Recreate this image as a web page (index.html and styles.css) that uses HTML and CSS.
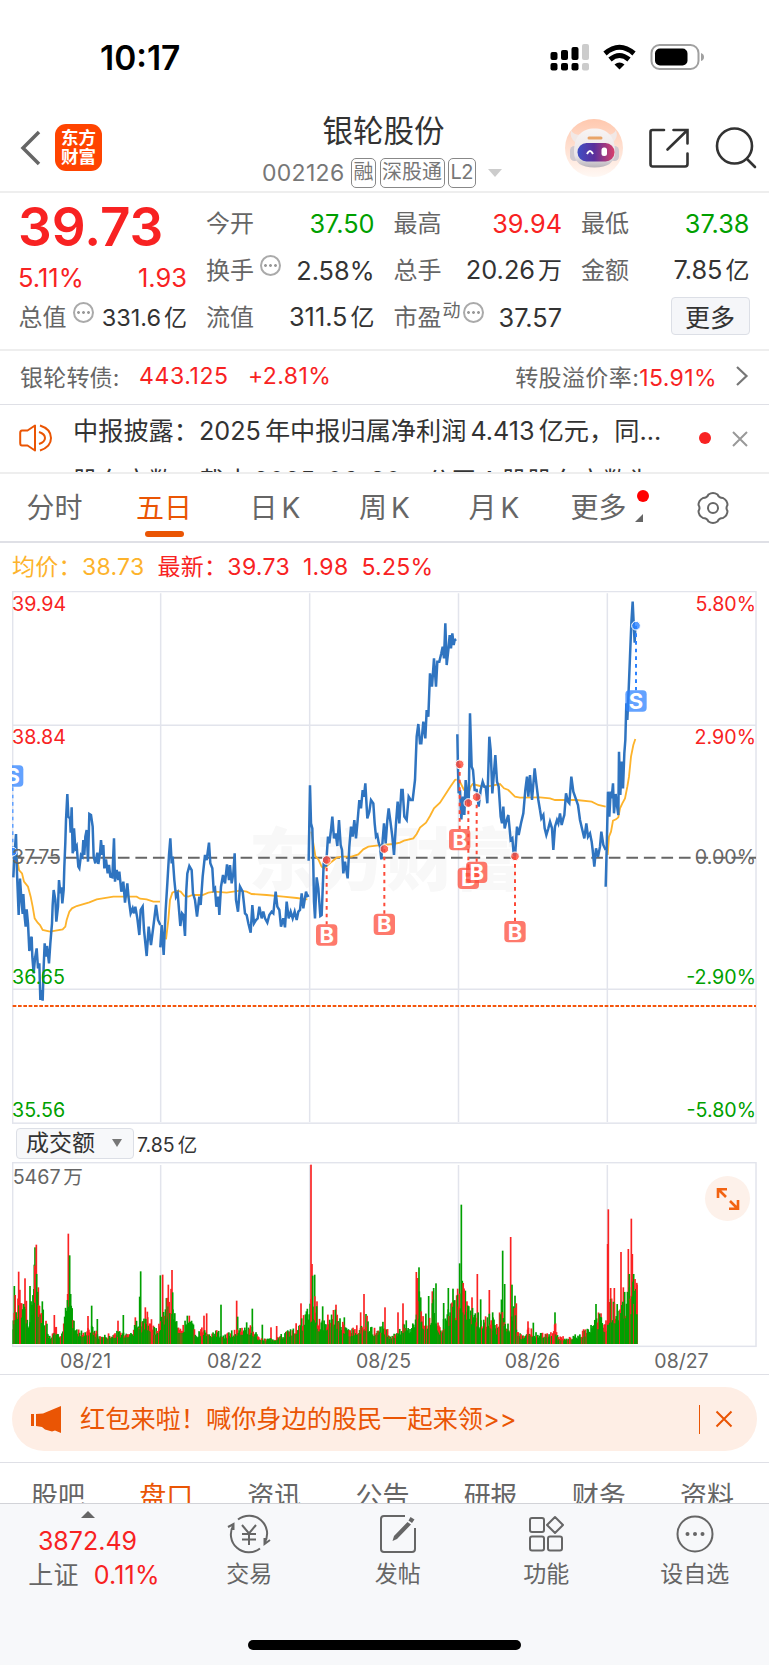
FILE: index.html
```
<!DOCTYPE html>
<html lang="zh-CN">
<head>
    <meta charset="UTF-8">
    <title>银轮股份 002126</title>
    <link rel="stylesheet" href="styles.css">
</head>
<body>
<div class="status">
    <span class="time">10:17</span>
    <svg class="status-icons" width="156" height="28" viewBox="550 43 156 28">
        <g fill="#000">
            <rect x="551.5" y="52" width="7" height="8" rx="2"/>
            <rect x="562" y="50" width="7" height="10" rx="2"/>
            <rect x="572.5" y="47" width="7" height="13" rx="2"/>
            <rect x="551.5" y="63" width="7" height="7.500" rx="2"/>
            <rect x="562" y="63" width="7" height="7.500" rx="2"/>
            <rect x="572.500" y="63" width="7" height="7.500" rx="2"/>
        </g>
        <g fill="#ccc">
            <rect x="583" y="44" width="7" height="16" rx="2"/>
            <rect x="583" y="63" width="7" height="7.500" rx="2"/>
        </g>
        <g fill="none" stroke="#000" stroke-width="5">
            <path d="M606 53.500Q620.500 41 635 53.500"/>
            <path d="M611 59.500Q620.500 51.500 630 59.500"/>
        </g>
        <path d="M615.500 64.500Q620.500 60.500 625.500 64.500L620.500 69.500Z"/>
        <rect x="652.500" y="45" width="47" height="24" rx="8" fill="none" stroke="#a0a0a0" stroke-width="2"/>
        <rect x="656" y="48.500" width="32.500" height="17" rx="5"/>
        <path d="M702 53Q705 54 705 57Q705 60 702 61Z" fill="#a0a0a0"/>
    </svg>
</div>

<div class="header">
    <div class="header-left">
        <svg width="22" height="36" viewBox="0 0 22 36"><path d="M19 2L3 18L19 34" fill="none" stroke="#666" stroke-width="3.500"/></svg>
        <div class="logo">东方<br>财富</div>
    </div>
    <div class="header-title">
        <h1>银轮股份</h1>
        <div class="code"><span class="num">002126</span><i>融</i><i>深股通</i><i class="l2">L2</i><b class="down"></b></div>
    </div>
    <div class="header-right">
        <svg width="58" height="58" viewBox="0 0 58 58">
            <defs>
                <linearGradient id="peach" x1="0" y1="0" x2="0" y2="1"><stop offset="0" stop-color="#ffc8ae"/><stop offset="1" stop-color="#fff8f4"/></linearGradient>
                <linearGradient id="shell" x1="0" y1="0" x2="0" y2="1"><stop offset="0" stop-color="#f8f4f3"/><stop offset=".7" stop-color="#e9e5e8"/><stop offset="1" stop-color="#b9b3ba"/></linearGradient>
                <linearGradient id="visor" x1="0" y1="0" x2="1" y2="0"><stop offset="0" stop-color="#3f4fc4"/><stop offset=".45" stop-color="#5a2f9c"/><stop offset="1" stop-color="#d9406a"/></linearGradient>
            </defs>
            <circle cx="29" cy="29" r="29" fill="url(#peach)"/>
            <path d="M11 24Q4 19 6 11Q8 16 16 16ZM47 24Q54 19 51 11Q49 16 41 16Z" fill="#f1e8e6"/>
            <rect x="5" y="27" width="9" height="15" rx="4.500" fill="#cfc9cf"/>
            <rect x="45" y="27" width="9" height="15" rx="4.500" fill="#cfc9cf"/>
            <path d="M9 33C9 17 17 9.500 29.500 9.500S50 17 50 33Q50 48.500 29.500 48.500T9 33Z" fill="url(#shell)"/>
            <rect x="22.500" y="17.500" width="15" height="3" rx="1.500" fill="#e9a468"/>
            <rect x="12.500" y="24" width="37" height="18.500" rx="9" fill="url(#visor)"/>
            <path d="M22 35Q25 29 28 35" fill="none" stroke="#fff" stroke-width="2"/>
            <rect x="36.500" y="28.500" width="5.500" height="8.500" rx="2.500" fill="#fff"/>
        </svg>
        <svg width="42" height="42" viewBox="648 127 42 42" fill="none" stroke="#333" stroke-width="2.600" stroke-linecap="round">
            <path d="M664 130H652.500Q650.500 130 650.500 132V164Q650.500 166.500 652.500 166.500H685Q687.500 166.500 687.500 164V153.500M673.500 130H687.500V143.500M687 130.500L667.500 149.500"/>
        </svg>
        <svg width="43" height="43" viewBox="716 126 43 43" fill="none" stroke="#333" stroke-width="2.600" stroke-linecap="round">
            <circle cx="735.500" cy="146" r="17.500"/><path d="M748 159L756 167"/>
        </svg>
    </div>
</div>

<div class="quote">
    <div class="price"><strong>39.73</strong><div class="row red"><span>5.11%</span><span>1.93</span></div></div>
    <div class="cell"><label>今开</label><em class="green">37.50</em></div>
    <div class="cell"><label>最高</label><em class="red">39.94</em></div>
    <div class="cell"><label>最低</label><em class="green">37.38</em></div>
    <div class="cell"><label>换手</label><u class="tip"></u><em>2.58%</em></div>
    <div class="cell"><label>总手</label><em>20.26<s>万</s></em></div>
    <div class="cell"><label>金额</label><em>7.85<s>亿</s></em></div>
    <div class="cell small"><label>总值</label><u class="tip"></u><em>331.6<s>亿</s></em></div>
    <div class="cell"><label>流值</label><em>311.5<s>亿</s></em></div>
    <div class="cell"><label>市盈</label><sup>动</sup><u class="tip pe"></u><em>37.57</em></div>
    <div class="cell"><button class="more">更多</button></div>
</div>

<div class="bond">
    <span class="bond-name">银轮转债:</span><span class="red bond-price">443.125</span><span class="red">+2.81%</span>
    <span class="bond-rate">转股溢价率:<span class="red">15.91%</span></span>
    <svg width="14" height="22" viewBox="0 0 14 22"><path d="M2 2L11.500 11L2 20" fill="none" stroke="#777" stroke-width="2.200"/></svg>
</div>

<div class="news">
    <svg class="horn" width="34" height="30" viewBox="0 0 34 30" fill="none" stroke="#ea5504" stroke-width="2">
        <path d="M16 2.500V27.500L8.500 22.500H3Q1.200 22.500 1.200 20V10Q1.200 7.500 3 7.500H8.500Z" stroke-linejoin="round"/>
        <path d="M20 9Q26 11 26 15T20 21M21 2.500Q32 6 32 15T21 27.500"/>
    </svg>
    <div class="news-list">
        <p>中报披露：2025<s></s>年中报归属净利润<s></s>4.413<s></s>亿元，同...</p>
        <p>股东户数：截止<s></s>2025-06-30，公司<s></s>A<s></s>股股东户数为</p>
    </div>
    <b class="dot"></b>
    <svg width="18" height="18" viewBox="0 0 18 18"><path d="M2 2L16 16M16 2L2 16" stroke="#999" stroke-width="2"/></svg>
</div>

<div class="tabs">
    <span>分时</span>
    <span class="active">五日</span>
    <span>日<s></s>K</span>
    <span>周<s></s>K</span>
    <span>月<s></s>K</span>
    <span class="has-more">更多</span>
    <svg width="34" height="34" viewBox="0 0 34 34" fill="none" stroke="#666" stroke-width="2">
        <path d="M12.500 3.500Q17 .5 21.500 3.500Q23 7 27 7Q31.500 9.500 31.500 14Q29.500 17 31.500 20Q31.500 24.500 27 27Q23 27 21.500 30.500Q17 33.500 12.500 30.500Q11 27 7 27Q2.500 24.500 2.500 20Q4.500 17 2.500 14Q2.500 9.500 7 7Q11 7 12.500 3.500Z"/>
        <circle cx="17" cy="17" r="5"/>
    </svg>
</div>

<div class="legend"><span class="avg">均价：38.73</span><span>最新：39.73</span><span>1.98</span><span>5.25%</span></div>

<!-- 五日分时图 -->
<svg class="price-chart" width="745" height="534" viewBox="36 3 2235 1602">
    <text class="mark" x="746" y="884">东方财富</text>
    <g class="grid">
        <path d="M482 10V1596M929 10V1596M1375.500 10V1596M1822 10V1596M38 406H2268M38 1198H2268"/>
        <rect x="38" y="4.500" width="2230" height="1595"/>
    </g>
    <path class="zero" d="M38 803H2268"/>
    <path class="limit" d="M38 1248H2268"/>
    <path class="sell-line" d="M38 592V780"/>
    <g class="avg-line">
        <polyline points="50,800 57,840 66,850 72,875 84,890 92,920 98,950 104,985 113,998 120,1005 128,1020 150,1025 188,1018 196,1010 200,990 208,965 216,955 230,948 268,937 290,928 340,920 410,920 420,926 440,928 460,935 480,935"/>
        <polyline points="498,1048 505,990 510,930 517,908 530,902 542,905 553,918 565,920 578,915 608,915 625,908 645,905 680,908 720,902 740,905 755,912 800,915 850,920 890,924 922,928"/>
        <g transform="translate(900 0)">
            <polyline points="34,725 40,760 46,798 55,808 65,830 72,835 95,815 110,803 125,800 155,800 175,793 190,778 205,770 235,766 280,762 300,758 312,752 340,745 350,732 360,713 378,698 390,678 402,655 420,638 435,615 450,592 465,570 470,568"/>
            <polyline points="474,568 482,580 492,600 505,612 512,590 518,582 540,588 560,590 600,582 612,595 625,600 645,620 660,623 720,622"/>
        </g>
        <g transform="translate(1620 0)">
            <polyline points="0,622 30,625 45,630 110,630 155,635 175,645 197,650"/>
            <polyline points="203,795 207,740 213,725 219,692 228,688 235,682 240,655 247,640 255,625 262,590 267,560 273,500 280,465 286,447"/>
        </g>
    </g>
    <g class="price-line">
        <polyline points="40,862 43,800 48,732 51,850 56,975 60,866 64,925 68,972 70,912 74,980 77,1010 80,958 84,1000 88,1083 92,1048 95,1040 97,1100 101,1150 105,1105 110,1075 114,1135 118,1120 121,1230 124,1200 128,1232 131,1130 134,1060 138,1100 141,1068 147,1120 151,1060 156,1000 158,945 161,900 166,930 169,995 174,950 177,870 181,910 184,892 187,940 191,900 193,830 196,757 198,690 202,612 205,680 210,685 212,728 215,652 218,790 222,715 226,775 230,768 235,830 238,835 243,795 247,800 250,750 253,795 256,740 260,720 264,815 268,672 273,675 278,710 281,800 286,820 292,788 295,822 300,790 303,750 307,795 310,765 313,835 318,808 323,850 327,825 331,860 337,862 342,745 345,875 350,840 355,870 358,845 364,905 370,875 375,938 382,880 386,925 392,970 398,955 402,970 406,950 412,985 418,1035 422,960 428,950 432,1020 440,1098 446,1010 453,1065 460,1010 468,945 474,990 481,1005"/>
        <polyline points="481,1072 485,1005 491,1095 497,960 502,880 507,795 511,745 515,820 518,800 523,870 528,920 533,910 541,1008 546,970 550,975 555,1038 559,900 562,850 568,828 575,840 579,910 585,930 591,980 598,920 602,945 608,860 615,795 620,810 627,758 631,820 637,835 641,900 645,895 649,950 655,920 658,975 663,890 669,855 675,880 681,823 687,870 690,825 695,880 700,850 704,790 708,930 714,965 720,890 728,905 735,970 740,975 745,1000 752,1028 757,945 762,1000 768,990 773,985 778,950 785,985 790,965 795,985 802,998 808,975 815,965 820,970 827,905 832,950 838,960 843,1010 850,985 855,1012 860,935 866,985 872,965 878,985 884,965 890,990 895,965 900,960 905,910 910,955 918,905 922,918 927,916"/>
        <g transform="translate(900 0)">
            <polyline points="26,812 30,586 33,700 37,715 40,830 42,935 45,985 50,862 55,895 61,978 65,975 68,900 71,820 75,800 78,830 84,740 88,760 93,720 97,680 102,745 107,730 112,768 117,690 122,765 126,780 130,850 135,815 143,865 148,770 153,710 158,740 163,690 168,745 173,690 178,630 183,655 188,600 192,620 196,580 202,685 208,665 213,630 220,640 224,700 228,740 232,735 236,758 240,770 244,808 248,750 252,700 257,760 262,690 266,655 272,700 277,740 282,795 288,700 293,635 298,700 304,600 308,600 313,680 320,690 326,620 332,630 338,630 345,570 350,440 355,402 360,460 364,460 370,395 376,445 380,360 385,380 390,250 396,290 402,205 408,290 412,215 418,215 424,190 428,170 432,205 436,100 440,225 445,180 449,135 453,175 457,130 461,165 464,150 469,148"/>
            <polyline points="472,433 474,540 476,610 480,600 484,688 489,620 493,675 497,570 502,620 506,650 510,370 515,530 519,540 524,600 530,600 536,650 542,600 548,575 553,590 557,590 562,640 568,440 572,480 577,610 581,560 586,495 591,575 596,590 602,680 606,700 610,650 614,715 620,690 625,675 632,750 637,745 641,790 645,800 651,710 656,735 663,700 670,670 676,600 681,560 685,620 690,555 696,630 704,535 709,580 715,630 720,660"/>
        </g>
        <g transform="translate(1620 0)">
            <polyline points="0,660 4,685 10,675 14,715 19,735 25,715 30,695 36,715 40,780 45,710 51,690 55,700 60,670 65,705 70,685 73,675 78,610 84,635 88,640 94,560 100,605 107,625 114,645 120,690 127,720 133,745 139,700 144,740 150,730 155,755 158,780 163,830 168,775 174,800 180,770 184,725 190,765 197,780"/>
            <polyline points="197,890 200,780 204,605 208,680 212,605 215,625 219,580 222,670 227,612 230,640 235,675 237,485 241,615 245,515 249,595 253,490 256,450 259,340 262,390 266,300 270,200 274,100 278,35 281,100 284,158 286,110"/>
        </g>
    </g>
    <g id="trades"></g>
    <g class="axis">
        <text class="up" x="36" y="62">39.94</text>
        <text class="up" x="36" y="461">38.84</text>
        <text x="36" y="821">37.75</text>
        <text class="fall" x="36" y="1182">36.65</text>
        <text class="fall" x="36" y="1580">35.56</text>
        <g text-anchor="end">
            <text class="up" x="2268" y="62">5.80%</text>
            <text class="up" x="2268" y="461">2.90%</text>
            <text x="2268" y="821">0.00%</text>
            <text class="fall" x="2268" y="1182">-2.90%</text>
            <text class="fall" x="2268" y="1580">-5.80%</text>
        </g>
    </g>
</svg>

<div class="vol-bar"><span class="select">成交额<b></b></span><span>7.85<s></s>亿</span></div>

<div class="vol">
    <svg width="745" height="186" viewBox="36 36 2235 558">
        <g class="grid">
            <path d="M482 45V582M929 45V582M1375.500 45V582M1822 45V582"/>
            <rect x="38" y="38" width="2230" height="551"/>
        </g>
        <g id="bars"></g>
        <text class="vol-max" x="38" y="102">5467<tspan dx="8">万</tspan></text>
    </svg>
    <span class="expand">
        <svg width="24" height="24" viewBox="0 0 24 24" fill="none" stroke="#f26312" stroke-width="2.600"><path d="M2 11V2.300H11M2.500 2.500L10 10M13 21.700H22V13M21.500 21.500L14 14"/></svg>
    </span>
</div>
<div class="dates"><span>08/21</span><span>08/22</span><span>08/25</span><span>08/26</span><span>08/27</span></div>

<div class="promo-wrap">
    <div class="promo">
        <svg width="31" height="27" viewBox="0 0 31 27" fill="#ea5504"><path d="M0 8H3V20H0ZM5 8L12 7.500L30 0V27L24 24.500L21 25.500L14 23.500L11 21L5 20Z"/></svg>
        <span>红包来啦！喊你身边的股民一起来领&gt;&gt;</span>
        <b></b>
        <svg width="18" height="18" viewBox="0 0 18 18"><path d="M1.500 1.500L16.500 16.500M16.500 1.500L1.500 16.500" stroke="#ea5504" stroke-width="2"/></svg>
    </div>
</div>

<div class="subtabs"><span>股吧</span><span class="active">盘口</span><span>资讯</span><span>公告</span><span>研报</span><span>财务</span><span>资料</span></div>

<div class="nav">
    <div class="index">
        <b></b>
        <span class="red">3872.49</span>
        <span>上证<em class="red">0.11%</em></span>
    </div>
    <div class="nav-item">
        <svg width="44" height="40" viewBox="0 0 44 40">
            <path d="M11 5.500A18 18 0 0 1 37.500 29M43 26L37.500 30V24M33 34.500A18 18 0 0 1 6.500 11M1 13L6.500 10V16M15 11L22 19.500L29 11M22 19.500V31M15 20H29M15 25.500H29"/>
        </svg>
        <span>交易</span>
    </div>
    <div class="nav-item">
        <svg width="44" height="40" viewBox="0 0 44 40">
            <path d="M29 2H8Q5 2 5 5V35Q5 38 8 38H36Q39 38 39 35V14"/>
            <path d="M34.500 3L38.500 5.500L36 9L32.500 6.500ZM31.500 8L35 10.500L21 25L16.500 27L18 22Z" fill="#666" stroke="none"/>
        </svg>
        <span>发帖</span>
    </div>
    <div class="nav-item">
        <svg width="44" height="40" viewBox="0 0 44 40">
            <rect x="6" y="4" width="14" height="14" rx="2"/><rect x="6" y="22.500" width="14" height="14" rx="2"/><rect x="24" y="22.500" width="14" height="14" rx="2"/>
            <path d="M31 3L39 11L31 19L23 11Z" stroke-linejoin="round"/>
        </svg>
        <span>功能</span>
    </div>
    <div class="nav-item">
        <svg width="44" height="40" viewBox="0 0 44 40">
            <circle cx="22" cy="20" r="17.500"/>
            <g fill="#666" stroke="none"><circle cx="14.500" cy="20" r="2"/><circle cx="22" cy="20" r="2"/><circle cx="29.500" cy="20" r="2"/></g>
        </svg>
        <span>设自选</span>
    </div>
    <div class="home"></div>
</div>
<script src="chart.js"></script>
</body>
</html>
```
FILE: styles.css
```
* {
    margin: 0;
    padding: 0;
    box-sizing: border-box;
}

body {
    width: 769px;
    height: 1665px;
    overflow: hidden;
    background: #fff;
    color: #333;
    font-family: Inter, "Noto Sans CJK SC", sans-serif;
}

svg {
    display: block;
    flex-shrink: 0;
}

i, em {
    font-style: normal;
}

/* 数字与汉字之间的间隙 */
s {
    text-decoration: none;
    margin-left: 4px;
}

u {
    text-decoration: none;
}

.red {
    color: #f82222 !important;
}

.green {
    color: #00a000 !important;
}

.status {
    height: 100px;
    padding: 43px 64px 0 100px;
    display: flex;
    justify-content: space-between;
}

.time {
    color: #000;
    font-size: 33.500px;
    font-weight: 600;
    line-height: 30px;
}

.header {
    height: 93px;
    border-bottom: 2px solid #eee;
    display: grid;
    grid-template-columns: 250px 269px 250px;
}

.header-left {
    display: flex;
    align-items: center;
    padding: 4px 0 0 20px;
}

.logo {
    width: 47px;
    height: 47px;
    margin-left: 13px;
    padding-top: 4px;
    border-radius: 11px;
    background: #ff4400;
    color: #fff;
    font-size: 17.500px;
    font-weight: 700;
    line-height: 19px;
    text-align: center;
}

.header-title h1 {
    margin: 10px 0 0 -2px;
    font-size: 30.500px;
    font-weight: 400;
    line-height: 42px;
    text-align: center;
}

.code {
    display: flex;
    align-items: center;
    height: 30px;
    margin-top: 6px;
    padding-left: 12px;
    color: #777;
    font-size: 23px;
}

.code .num {
    width: 89px;
    letter-spacing: .3px;
}

.code i {
    height: 30px;
    margin-right: 3.500px;
    padding: 0 1.500px;
    border: 1.500px solid #888;
    border-radius: 5px;
    font-size: 20px;
    line-height: 26px;
}

.code .l2 {
    letter-spacing: -.5px;
}

.down {
    margin-left: 9px;
    border: 7px solid transparent;
    border-top: 8px solid #ccc;
    border-bottom: 0;
}

.header-right {
    display: flex;
    align-items: center;
    padding: 4px 11px 0 46px;
    justify-content: space-between;
}

.header-right svg + svg {
    margin-left: -2px;
}

.quote {
    height: 158px;
    padding: 7px 19px 0;
    border-bottom: 2px solid #eee;
    display: grid;
    grid-template-columns: repeat(4, 168px);
    grid-auto-rows: 47px;
    column-gap: 19.500px;
}

.price {
    grid-row: span 2;
}

.price strong {
    display: block;
    margin-left: -1px;
    font-size: 53px;
    font-weight: 600;
    line-height: 54px;
    color: #f82222;
}

.price .row {
    display: flex;
    justify-content: space-between;
    margin: 9px 0 0 -1px;
    font-size: 25.500px;
    line-height: 30px;
}

.cell {
    display: flex;
    align-items: center;
    line-height: 46px;
    color: #666;
    font-size: 24px;
    white-space: nowrap;
}

.cell label {
    margin-left: -.5px;
}

.cell em {
    margin-left: auto;
    color: #333;
    font-size: 25.300px;
}

.cell em s {
    font-size: 24px;
    margin-left: 3px;
}

.cell.small em {
    font-size: 23.500px;
}

.cell.small em s {
    font-size: 23px;
}

.cell sup {
    align-self: flex-start;
    font-size: 18px;
    line-height: 34px;
    margin-left: 1px;
}

.tip {
    display: block;
    width: 21px;
    height: 21px;
    margin: -10px 0 0 6px;
    border: 2px solid #aaa;
    border-radius: 50%;
    background: radial-gradient(circle, #999 1.200px, transparent 1.600px) center / 5px 17px repeat-x;
    background-clip: content-box;
    padding: 0 1px;
}

.tip.pe {
    margin-left: 2px;
}

.more {
    width: 79px;
    height: 38px;
    margin: -4px 0 0 auto;
    border: 1px solid #dcdfe6;
    border-radius: 4px;
    background: #f5f6f9;
    color: #333;
    font: 25px/32px "Noto Sans CJK SC", sans-serif;
}

.bond {
    height: 54px;
    padding: 0 20px 3px 20px;
    border-bottom: 1px solid #dfe0e6;
    display: flex;
    align-items: center;
    color: #666;
    font-size: 23px;
    letter-spacing: .4px;
}

.bond-name {
    width: 119px;
    letter-spacing: .2px;
}

.bond-price {
    width: 109px;
    letter-spacing: .6px;
}

.bond-rate {
    margin-left: auto;
    margin-right: 18px;
}

.news {
    height: 69px;
    padding: 0 20px 0 19px;
    border-bottom: 2px solid #eee;
    display: flex;
    align-items: center;
}

.horn {
    margin-top: -2px;
}

.news-list {
    width: 600px;
    height: 67px;
    margin: 0 auto 0 20px;
    overflow: hidden;
    font-size: 25.200px;
    white-space: nowrap;
}

.news-list p {
    height: 50px;
    line-height: 53px;
}

.dot {
    width: 12px;
    height: 12px;
    margin: -1px 20px 0 0;
    border-radius: 50%;
    background: #f82222;
}

.tabs {
    height: 69px;
    border-bottom: 2px solid #dfe0e6;
    display: grid;
    grid-template-columns: 109px 110px 112px 107px 112px 97px 1fr;
    color: #666;
    font-size: 28px;
    line-height: 68px;
    text-align: center;
}

.tabs span {
    position: relative;
}

.tabs svg {
    margin: 17px 0 0 49px;
}

.tabs .active {
    color: #ea5504;
}

.tabs .active::after {
    content: "";
    position: absolute;
    left: 36px;
    bottom: 5px;
    width: 39px;
    height: 6px;
    border-radius: 3px;
    background: #ea5504;
}

.has-more::before {
    content: "";
    position: absolute;
    right: -2px;
    top: 16px;
    width: 12px;
    height: 12px;
    border-radius: 50%;
    background: #f00;
}

.has-more::after {
    content: "";
    position: absolute;
    right: 4px;
    top: 40px;
    border-left: 8px solid transparent;
    border-bottom: 8px solid #666;
}

.legend {
    height: 48px;
    padding-left: 12px;
    color: #f82222;
    font-size: 23px;
    letter-spacing: .3px;
    line-height: 48px;
}

.legend span {
    margin-right: 13px;
}

.legend .avg {
    color: #fdb32b;
}

.price-chart, .vol {
    margin-left: 12px;
}

.grid {
    fill: none;
    stroke: #e2e4ec;
    stroke-width: 4.500;
}

.mark {
    fill: #f8f8f8;
    font: 900 206px "Noto Sans CJK SC", sans-serif;
}

.zero {
    stroke: #666;
    stroke-width: 6;
    stroke-dasharray: 35 17.600;
}

.limit {
    stroke: #f4550c;
    stroke-width: 6;
    stroke-dasharray: 11 5;
}

.avg-line, .price-line {
    fill: none;
    stroke: #fdb32b;
    stroke-width: 5.500;
}

.price-line {
    stroke: #2f74c0;
    stroke-width: 7.500;
}

.axis {
    fill: #666;
    font-size: 59px;
}

.up {
    fill: #f82222;
}

.fall {
    fill: #00a000;
}

.sell-line {
    stroke: #60a0ff;
    stroke-width: 5;
    stroke-dasharray: 11 11;
}

.tag {
    fill: #fff;
    font: 700 66px Inter, sans-serif;
    text-anchor: middle;
}

.vol-bar {
    height: 37px;
    padding: 0 0 1px 16px;
    display: flex;
    align-items: center;
    font-size: 19.500px;
}

.vol-bar s {
    margin-left: 3px;
}

.select {
    width: 118px;
    height: 31px;
    margin-right: 3px;
    padding: 0 11px 0 9px;
    border: 1px solid #dcdfe6;
    border-radius: 4px;
    background: #f7f8fa;
    display: flex;
    align-items: center;
    justify-content: space-between;
    font-size: 23px;
    line-height: 28px;
}

.select b {
    border: 5px solid transparent;
    border-top: 8px solid #777;
    border-bottom: 0;
}

.vol {
    position: relative;
    height: 186px;
}

.vol-max {
    fill: #666;
    font-size: 59px;
}

.expand {
    position: absolute;
    right: 19px;
    top: 14px;
    width: 45px;
    height: 45px;
    border-radius: 50%;
    background: #fdf1ea;
    display: flex;
    align-items: center;
    justify-content: center;
}

.dates {
    height: 27px;
    padding: 0 13px 0 11px;
    border-bottom: 1px solid #dfe0e6;
    display: grid;
    grid-template-columns: repeat(5, 1fr);
    color: #666;
    font-size: 19.500px;
    line-height: 26px;
    text-align: center;
}

.promo-wrap {
    height: 88px;
    padding: 12px 12px 0;
    border-bottom: 1px solid #dfe0e6;
}

.promo {
    height: 64px;
    padding: 0 24px 0 19px;
    border-radius: 32px;
    background: #feeee5;
    display: flex;
    align-items: center;
    color: #ea5504;
    font-size: 25.200px;
}

.promo span {
    margin: -4px 0 0 18px;
}

.promo b {
    width: 1.500px;
    height: 29px;
    margin: 0 15px 0 auto;
    background: #ea5504;
}

.subtabs {
    height: 40px;
    padding: 0 8px 0 4px;
    overflow: hidden;
    display: grid;
    grid-template-columns: repeat(7, 1fr);
    color: #666;
    font-size: 27px;
    line-height: 68px;
    text-align: center;
}

.subtabs .active {
    color: #ea5504;
}

.nav {
    position: relative;
    height: 162px;
    border-top: 1px solid #d2d3d8;
    background: #f7f8fa;
    display: grid;
    grid-template-columns: 175px repeat(4, 1fr);
    color: #666;
    font-size: 23px;
}

.index, .nav-item {
    display: flex;
    flex-direction: column;
    align-items: center;
}

.index b {
    margin-top: 7px;
    border: 7px solid transparent;
    border-bottom: 7px solid #666;
    border-top: 0;
}

.index span {
    margin-top: 6px;
    font-size: 25px;
    line-height: 35px;
}

.index span + span {
    margin-top: -1px;
    padding-left: 13px;
    letter-spacing: .2px;
}

.index em {
    margin-left: 15px;
}

.nav-item svg {
    margin-top: 10px;
    fill: none;
    stroke: #666;
    stroke-width: 2;
}

.nav-item span {
    margin-top: 4px;
    line-height: 32px;
}

.home {
    position: absolute;
    left: 248px;
    bottom: 15px;
    width: 273px;
    height: 10px;
    border-radius: 5px;
    background: #000;
}
```
FILE: chart.js
```
var NS = "http://www.w3.org/2000/svg";

function add(parent, name, attrs, text) {
    var el = document.createElementNS(NS, name);
    for (var key in attrs) {
        el.setAttribute(key, attrs[key]);
    }
    if (text) {
        el.textContent = text;
    }
    parent.appendChild(el);
}

//买卖点: x, 成交点y, 标签中心y, 类型
var trades = [
    [38, 785, 558, "S"],
    [980, 810, 1035, "B"],
    [1153, 777, 1003, "B"],
    [1405, 639, 865, "B"],
    [1379, 523, 749, "B"],
    [1430, 621, 847, "B"],
    [1545, 799, 1025, "B"],
    [1908, 107, 333, "S"]
];
var g = document.getElementById("trades");
trades.forEach(function (t) {
    var color = t[3] == "B" ? "#fd4a38" : "#2c82ff";
    if (t[0] > 38) {
        add(g, "line", {x1: t[0], x2: t[0], y1: t[1], y2: t[2] - 32, stroke: color, "stroke-width": 6, "stroke-dasharray": "11 12"});
    }
    add(g, "circle", {cx: t[0], cy: t[1], r: 13, fill: color, "fill-opacity": 0.8, stroke: "#fff", "stroke-width": 3});
    add(g, "rect", {x: t[0] - 32, y: t[2] - 32, width: 64, height: 64, rx: 12, fill: color, "fill-opacity": 0.74});
    add(g, "text", {x: t[0], y: t[2] + 24, "class": "tag"}, t[3]);
});

//成交量轮廓: x, 高度
var base = [
    [38, 60], [45, 130], [60, 140], [75, 150], [85, 60], [95, 150], [105, 230], [115, 150], [125, 110], [135, 80],
    [150, 20], [165, 60], [175, 30], [190, 45], [200, 120], [212, 120], [225, 60], [240, 35], [260, 45], [280, 50],
    [295, 25], [320, 25], [350, 35], [375, 35], [400, 40], [415, 90], [425, 60], [435, 80], [450, 70], [465, 45],
    [480, 70], [495, 110], [510, 170], [520, 110], [530, 60], [550, 60], [572, 70], [590, 30], [610, 50], [630, 35],
    [650, 40], [670, 25], [690, 35], [705, 40], [720, 50], [755, 50], [780, 15], [820, 15], [850, 30], [880, 45],
    [910, 75], [925, 110], [945, 130], [955, 70], [970, 60], [1000, 100], [1020, 70], [1050, 40], [1080, 55], [1100, 75],
    [1120, 40], [1150, 60], [1170, 25], [1200, 40], [1215, 70], [1230, 50], [1245, 60], [1250, 130], [1260, 140], [1270, 80],
    [1290, 80], [1300, 130], [1320, 50], [1340, 80], [1360, 130], [1370, 130], [1384, 200], [1394, 150], [1410, 110], [1430, 100],
    [1445, 60], [1470, 90], [1490, 50], [1505, 130], [1520, 70], [1530, 60], [1540, 110], [1552, 50], [1565, 25], [1590, 45],
    [1610, 30], [1640, 35], [1655, 40], [1665, 60], [1675, 20], [1700, 20], [1740, 30], [1770, 50], [1785, 80], [1800, 80],
    [1820, 60], [1830, 120], [1850, 110], [1870, 130], [1890, 160], [1905, 170], [1912, 160]
];
//放量的柱子
var peaks = "43,174,g 56,217,r 75,197,r 90,174,g 103,238,g 105,290,g 109,298,r 115,170,r 127,128,g 163,87,r 203,150,r 205,331,r " +
    "209,266,g 212,150,g 264,84,r 275,115,g 292,75,g 354,70,r 370,87,g 406,80,r 419,142,g 422,218,g 436,110,r 442,97,r " +
    "481,206,g 488,208,r 505,178,r 516,222,r 518,155,g 562,85,g 568,85,r 612,85,r 620,92,r 663,118,g 710,130,r 713,82,g " +
    "740,65,g 757,106,g 787,58,g 813,50,r 830,54,r 903,122,r 933,538,r 936,240,r 938,205,g 944,208,g 951,128,r 968,113,g " +
    "1008,118,r 1033,80,g 1082,95,r 1092,150,r 1098,90,g 1155,110,r 1194,95,r 1209,122,r 1249,216,r 1253,198,r 1257,230,g " +
    "1262,140,g 1286,144,g 1297,158,r 1301,168,g 1308,182,g 1331,123,g 1345,168,g 1359,166,g 1373,166,r 1379,242,g 1384,418,g " +
    "1391,168,r 1396,160,g 1416,140,r 1432,210,r 1442,134,g 1468,162,r 1478,95,g 1508,280,g 1514,180,g 1532,321,r 1536,178,g " +
    "1545,145,g 1549,122,r 1584,68,r 1600,64,g 1665,95,g 1788,120,g 1803,92,r 1823,300,r 1825,404,r 1832,168,r 1843,168,r " +
    "1863,276,r 1870,170,r 1885,285,r 1888,210,g 1894,376,r 1897,270,r 1901,210,g 1905,195,r 1911,178,r";
var bars = document.getElementById("bars");
var seed = 7;

function rand() {
    seed = (seed * 9301 + 49297) % 233280;
    return seed / 233280;
}

function bar(x, h, type) {
    add(bars, "rect", {x: x - 2.5, y: 582 - h, width: 5, height: h, fill: type == "r" ? "#fb2222" : "#00a000"});
}

peaks.split(" ").forEach(function (p) {
    var v = p.split(",");
    bar(+v[0], +v[1], v[2]);
});
var k = 0;
for (var x = 40; x < 1912; x += 2.8) {
    while (base[k + 1][0] < x) {
        k++;
    }
    var a = base[k], b = base[k + 1];
    var h = a[1] + (b[1] - a[1]) * (x - a[0]) / (b[0] - a[0]);
    var type = rand() < 0.35 ? "r" : "g";
    bar(x, h * (type == "r" ? 0.6 + rand() * 0.6 : 0.55 + rand() * 0.6), type);
    //底部以绿色为主
    if (rand() < 0.6) {
        bar(x, h * 0.55, "g");
    }
}
```
